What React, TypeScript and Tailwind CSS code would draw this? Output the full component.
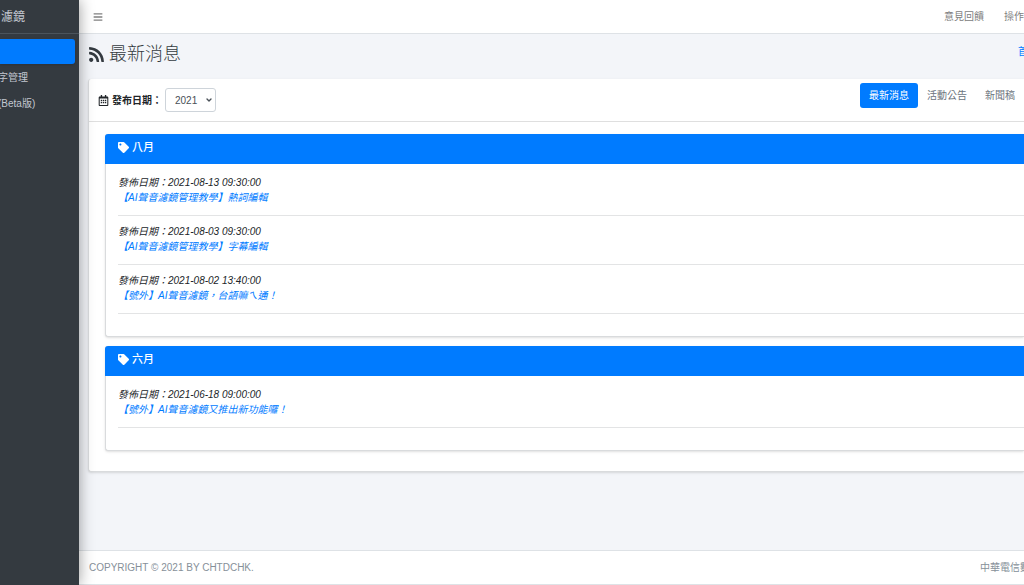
import { FaBars, FaRegCalendarAlt, FaRss, FaTag } from "react-icons/fa";
import { ChevronDown } from "lucide-react";

type News = { date: string; title: string };

const months: { name: string; news: News[] }[] = [
  {
    name: "八月",
    news: [
      { date: "2021-08-13 09:30:00", title: "【AI聲音濾鏡管理教學】熱詞編輯" },
      { date: "2021-08-03 09:30:00", title: "【AI聲音濾鏡管理教學】字幕編輯" },
      { date: "2021-08-02 13:40:00", title: "【號外】AI聲音濾鏡，台語嘛ㄟ通！" },
    ],
  },
  {
    name: "六月",
    news: [
      { date: "2021-06-18 09:00:00", title: "【號外】AI聲音濾鏡又推出新功能囉！" },
    ],
  },
];

const Sidebar = () => (
  <aside className="relative z-10 w-[79px] shrink-0 bg-[#343a40] text-[#c2c7d0] shadow-[0_0_14px_rgba(0,0,0,0.4)]">
    <a
      href="#"
      className="flex h-[34px] items-center border-b border-[#4b545c] pl-px text-xs"
    >
      濾鏡
    </a>
    <nav className="flex flex-col pt-[5px] pr-1">
      <a
        href="#"
        aria-label="最新消息"
        aria-current="page"
        className="h-[25px] rounded-r-[3px] bg-[#007bff] shadow"
      />
      <a href="#" className="-ml-0.5 flex h-[26px] items-center whitespace-nowrap">
        字管理
      </a>
      <a href="#" className="-ml-0.5 flex h-[26px] items-center whitespace-nowrap">
        (Beta版)
      </a>
    </nav>
  </aside>
);

const Navbar = () => (
  <header className="flex h-[34px] shrink-0 items-center justify-between border-b border-[#dee2e6] bg-white pl-[14px] text-[#808080]">
    <button type="button" aria-label="選單">
      <FaBars size={10} />
    </button>
    <nav className="flex gap-5 whitespace-nowrap">
      <a href="#">意見回饋</a>
      <a href="#">操作</a>
    </nav>
  </header>
);

const MonthCard = ({ name, news }: { name: string; news: News[] }) => (
  <section className="rounded-l-[3px] border-b border-l border-[#d9dbdd] bg-white pb-[14px] shadow-sm">
    <h2 className="-ml-px flex h-[30px] items-center gap-[3px] rounded-tl-[3px] bg-[#007bff] pb-1 pl-[13px] text-[11px] font-medium text-white">
      <FaTag size={11} />
      {name}
    </h2>
    <ul className="pt-[11px] pl-3">
      {news.map((item) => (
        <li
          key={item.date}
          className="mb-2 border-b border-[#e3e4e5] pb-[10px] leading-[15px] italic"
        >
          <p>發佈日期：{item.date}</p>
          <a href="#" className="block text-[#007bff]">
            {item.title}
          </a>
        </li>
      ))}
    </ul>
  </section>
);

const App = () => {
  return (
    <div className="flex min-h-screen overflow-hidden bg-[#f3f5f9] font-['Liberation_Sans','Noto_Sans_CJK_TC',sans-serif] text-[10px] text-[#212529]">
      <Sidebar />

      <div className="flex min-w-0 flex-1 flex-col">
        <Navbar />

        <main className="flex-1 pl-[9px]">
          <div className="flex h-[45px] justify-between">
            <h1 className="flex h-10 items-center gap-1 text-lg font-light text-[#343a40]">
              <FaRss size={17} />
              最新消息
            </h1>
            <a href="#" className="w-1.5 overflow-hidden pt-[10px] whitespace-nowrap text-[#007bff]">
              首頁
            </a>
          </div>

          <div className="rounded-l-[3px] border-b border-l border-[#d9dbdd] bg-white shadow-sm">
            <div className="flex h-[43px] items-start justify-between border-b border-[#dfdfdf] pl-[9px]">
              <div className="flex items-center gap-[3px] pt-[9px]">
                <FaRegCalendarAlt size={11} />
                <label htmlFor="year" className="font-bold">
                  發布日期：
                </label>
                <div className="grid items-center">
                  <select
                    id="year"
                    defaultValue="2021"
                    className="col-start-1 row-start-1 h-6 w-[51px] appearance-none rounded-[3px] border border-[#ced4da] bg-white pl-[9px] text-[#495057]"
                  >
                    <option>2021</option>
                  </select>
                  <ChevronDown
                    size={8}
                    strokeWidth={4}
                    className="pointer-events-none col-start-1 row-start-1 mr-[3px] justify-self-end text-[#495057]"
                  />
                </div>
              </div>

              <nav className="flex pt-1 leading-[25px] whitespace-nowrap text-[#6c757d]">
                <a href="#" className="rounded-[3px] bg-[#007bff] px-[9px] text-white">
                  最新消息
                </a>
                <a href="#" className="px-[9px]">
                  活動公告
                </a>
                <a href="#" className="px-[9px]">
                  新聞稿
                </a>
              </nav>
            </div>

            <div className="flex flex-col gap-[9px] pt-3 pb-5 pl-4">
              {months.map((month) => (
                <MonthCard key={month.name} {...month} />
              ))}
            </div>
          </div>
        </main>

        <footer className="flex h-[35px] shrink-0 items-center justify-between overflow-hidden border-y border-[#dee2e6] bg-white pl-[10px] text-[#869099]">
          <span>COPYRIGHT © 2021 BY CHTDCHK.</span>
          <span className="w-11 overflow-hidden whitespace-nowrap">中華電信數</span>
        </footer>
      </div>
    </div>
  );
};

export default App;
